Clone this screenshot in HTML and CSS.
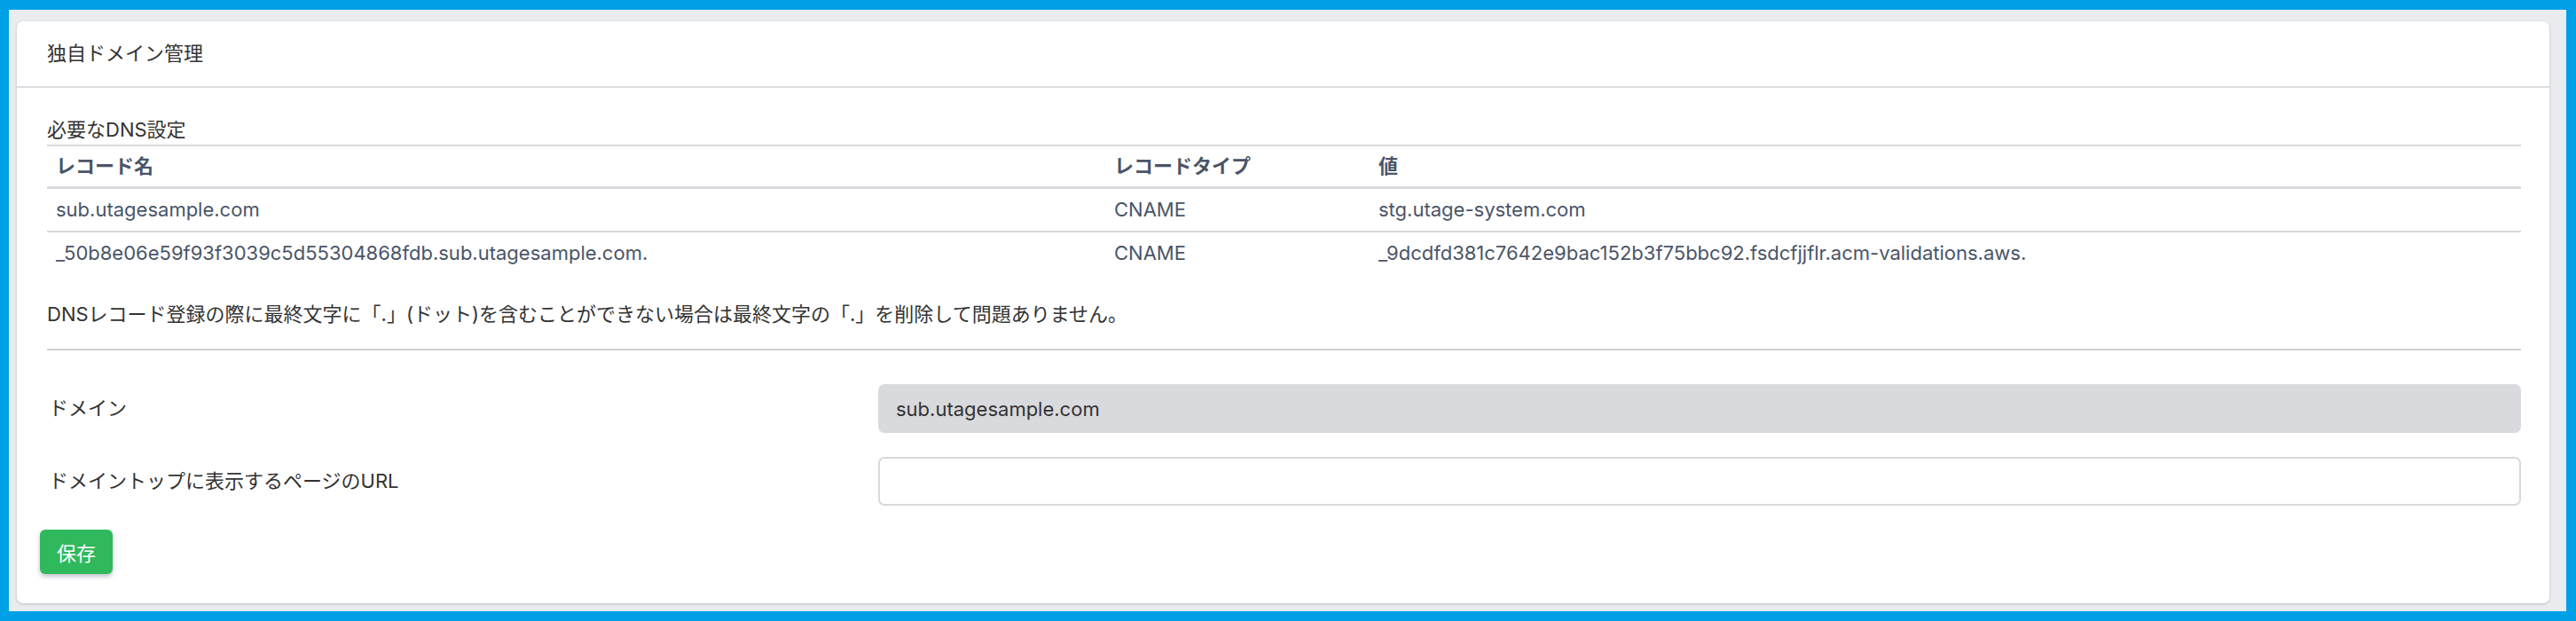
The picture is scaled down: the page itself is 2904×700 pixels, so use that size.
FILE: index.html
```html
<!DOCTYPE html>
<html lang="ja">
<head>
  <meta charset="UTF-8">
  <meta name="viewport" content="width=device-width, initial-scale=1.0">
  <title>独自ドメイン管理</title>
  <link rel="stylesheet" href="styles.css">
</head>
<body>
  <div class="frame">
    <div class="card">
      <div class="card-header">独自ドメイン管理</div>
      <div class="card-body">
        <div class="dns-title">必要なDNS設定</div>
        <table class="dns-table">
          <thead>
            <tr>
              <th class="col-name">レコード名</th>
              <th class="col-type">レコードタイプ</th>
              <th>値</th>
            </tr>
          </thead>
          <tbody>
            <tr>
              <td>sub.utagesample.com</td>
              <td>CNAME</td>
              <td>stg.utage-system.com</td>
            </tr>
            <tr>
              <td>_50b8e06e59f93f3039c5d55304868fdb.sub.utagesample.com.</td>
              <td>CNAME</td>
              <td>_9dcdfd381c7642e9bac152b3f75bbc92.fsdcfjjflr.acm-validations.aws.</td>
            </tr>
          </tbody>
        </table>
        <p class="note">DNSレコード登録の際に最終文字に「.」(ドット)を含むことができない場合は最終文字の「.」を削除して問題ありません。</p>
        <hr class="divider">

        <div class="form-row">
          <label class="form-label">ドメイン</label>
          <input type="text" class="form-input" value="sub.utagesample.com" disabled>
        </div>
        <div class="form-row">
          <label class="form-label">ドメイントップに表示するページのURL</label>
          <input type="text" class="form-input">
        </div>

        <button class="btn-save">保存</button>
      </div>
    </div>
  </div>
</body>
</html>
```

FILE: styles.css
```css
/* base */
* {
  margin: 0;
  padding: 0;
  box-sizing: border-box;
}

body {
  font-family: "Inter", "Noto Sans CJK JP", sans-serif;
  font-size: 22px;
  line-height: 33px;
  color: #333;
  background-color: #00a0e6;
  width: 2904px;
  height: 700px;
  padding: 11px 11px 11px 10px;
}

.frame {
  background-color: #ebecef;
  height: 678px;
  padding: 13px 19px 9px 9px;
}

/* card */
.card {
  background-color: #fff;
  border-radius: 7px;
  box-shadow: 0 1px 3px rgba(40, 50, 80, 0.25);
  height: 656px;
}

.card-header {
  padding: 20px 34px;
  border-bottom: 2px solid #dcdde1;
  color: #333;
}

.card-body {
  padding: 31px 32px 32px 34px;
}

.dns-title {
  color: #333;
}

/* table */
.dns-table {
  width: 100%;
  border-collapse: collapse;
  color: #4a5568;
}

.dns-table th {
  text-align: left;
  font-weight: 700;
  padding: 6px 10px;
  border-top: 2px solid #d9dadf;
  border-bottom: 3px solid #d9dadf;
}

.dns-table td {
  padding: 7px 10px;
  white-space: nowrap;
}

.dns-table tbody tr:first-child td {
  border-bottom: 2px solid #d9dadf;
}

.col-name {
  width: 1193px;
}

.col-type {
  width: 298px;
}

.note {
  margin-top: 29px;
  margin-bottom: 22px;
}

.divider {
  border: none;
  border-top: 2px solid #cfd0d4;
  margin-bottom: 38px;
}

/* form */
.form-row {
  display: grid;
  grid-template-columns: 937px 1fr;
  align-items: center;
  margin-bottom: 27px;
}

.form-label {
  padding-left: 2px;
}

.form-input {
  height: 55px;
  border: 2px solid #d8d9dd;
  border-radius: 7px;
  padding: 0 18px;
  font-family: "Inter", "Noto Sans CJK JP", sans-serif;
  font-size: 22px;
  color: #333;
  background-color: #fff;
  outline: none;
}

.form-input:disabled {
  background-color: #d9dadd;
  border-color: #d9dadd;
}

.btn-save {
  margin-left: -8px;
  height: 50px;
  padding: 0 19px;
  background-color: #2fb95c;
  color: #fff;
  border: none;
  border-radius: 6px;
  font-family: "Inter", "Noto Sans CJK JP", sans-serif;
  font-size: 22px;
  box-shadow: 0 3px 5px rgba(50, 60, 90, 0.3);
  cursor: pointer;
}
```
